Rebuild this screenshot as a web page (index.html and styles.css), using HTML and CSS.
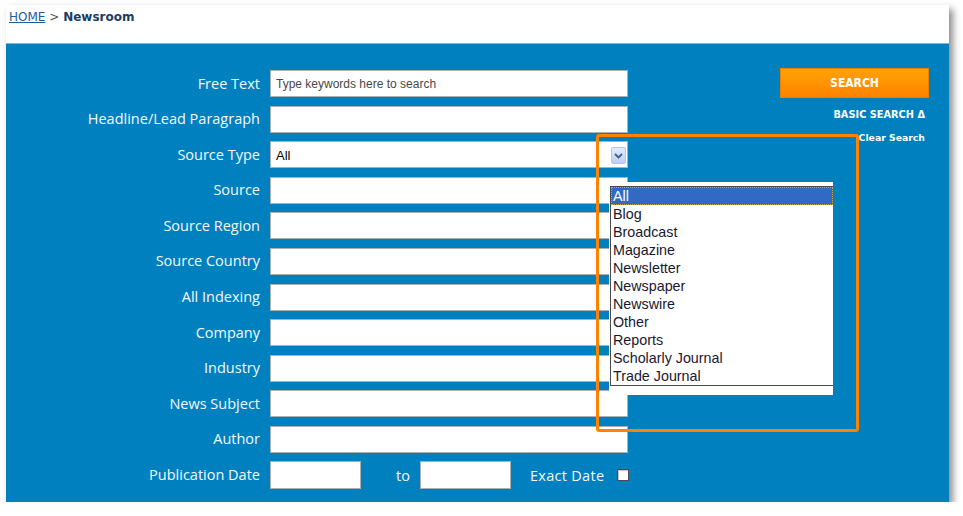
FILE: index.html
```html
<!DOCTYPE html>
<html>
<head>
<meta charset="utf-8">
<title>Newsroom</title>
<link rel="stylesheet" href="styles.css">
</head>
<body>
<div class="frame">
  <div class="crumbs"><a class="home" href="#">HOME</a> <span class="sep">&gt;</span> <b class="current">Newsroom</b></div>
  <div class="panel">
    <form class="search-form">
      <div class="fields">
        <label class="lbl">Free Text</label><input class="txt" type="text" placeholder="Type keywords here to search">
        <label class="lbl">Headline/Lead Paragraph</label><input class="txt" type="text">
        <label class="lbl">Source Type</label>
        <div class="select"><span class="sel-val">All</span><span class="sel-btn"><svg width="9" height="6" viewBox="0 0 9 6"><path d="M1 1 L4.5 4.5 L8 1" fill="none" stroke="#4a5d80" stroke-width="1.8"/></svg></span></div>
        <label class="lbl">Source</label><input class="txt" type="text">
        <label class="lbl">Source Region</label><input class="txt" type="text">
        <label class="lbl">Source Country</label><input class="txt" type="text">
        <label class="lbl">All Indexing</label><input class="txt" type="text">
        <label class="lbl">Company</label><input class="txt" type="text">
        <label class="lbl">Industry</label><input class="txt" type="text">
        <label class="lbl">News Subject</label><input class="txt" type="text">
        <label class="lbl">Author</label><input class="txt" type="text">
        <label class="lbl">Publication Date</label>
        <div class="date-row">
          <input class="txt date" type="text">
          <span class="to">to</span>
          <input class="txt date" type="text">
          <span class="exact">Exact Date</span>
          <span class="check"></span>
        </div>
      </div>
      <div class="actions">
        <button class="search-btn" type="button">SEARCH</button>
        <a class="basic" href="#">BASIC SEARCH &Delta;</a>
        <a class="clear" href="#">Clear Search</a>
      </div>
    </form>
    <div class="popup">
      <ul class="options">
        <li class="opt selected">All</li>
        <li class="opt">Blog</li>
        <li class="opt">Broadcast</li>
        <li class="opt">Magazine</li>
        <li class="opt">Newsletter</li>
        <li class="opt">Newspaper</li>
        <li class="opt">Newswire</li>
        <li class="opt">Other</li>
        <li class="opt">Reports</li>
        <li class="opt">Scholarly Journal</li>
        <li class="opt">Trade Journal</li>
      </ul>
    </div>
    <div class="callout"></div>
  </div>
</div>
</body>
</html>
```

FILE: styles.css
```css
* { box-sizing: border-box; }

html, body {
  margin: 0;
  padding: 0;
  background: #ffffff;
}

body {
  font-family: "DejaVu Sans", Verdana, sans-serif;
}

.frame {
  margin: 5px 0 0 6px;
  width: 943px;
  background: #ffffff;
  box-shadow: 4px 4px 7px rgba(0, 0, 0, 0.45);
}

.crumbs {
  height: 38px;
  padding: 5px 3px 0;
  font-size: 12px;
  line-height: 14px;
  color: #555;
}

.home {
  color: #1f5a9c;
  text-decoration: underline;
}

.sep {
  color: #555;
}

.current {
  color: #1b3d60;
  font-weight: bold;
}

.panel {
  position: relative;
  height: 459px;
  background: #0180bf;
  border-top: 1px solid #7db8de;
  padding-top: 24px;
}

.search-form {
  display: flex;
  align-items: flex-start;
}

.fields {
  margin-top: 2px;
  display: grid;
  grid-template-columns: 254px 358px;
  grid-auto-rows: 27px;
  column-gap: 10px;
  row-gap: 8.6px;
  align-items: center;
}

.lbl {
  font-family: "Open Sans", sans-serif;
  font-size: 14.5px;
  color: #f4f8fb;
  text-align: right;
  white-space: nowrap;
  line-height: 26px;
}

.txt {
  display: block;
  width: 100%;
  height: 27px;
  margin: 0;
  border: 1px solid #a9b0b6;
  background: #ffffff;
  padding: 0 5px;
  font-family: "Liberation Sans", Arial, sans-serif;
  font-size: 12px;
  color: #222;
  outline: none;
}

.txt::placeholder {
  color: #484848;
  opacity: 1;
}

.select {
  height: 27px;
  background: #ffffff;
  border: 1px solid #a9b0b6;
  display: flex;
  align-items: center;
  justify-content: space-between;
  padding: 0 1px 0 5px;
  font-family: "Liberation Sans", Arial, sans-serif;
  font-size: 13px;
  color: #000;
}

.sel-val {
  padding-top: 2px;
}

.sel-btn {
  width: 15px;
  height: 17px;
  margin-top: 2px;
  border: 1px solid #b3c6ee;
  border-radius: 2px;
  background: linear-gradient(#e3ecfd, #bccff6);
  display: flex;
  align-items: center;
  justify-content: center;
}

.date-row {
  height: 28px;
  display: flex;
  align-items: center;
  font-family: "Open Sans", sans-serif;
  font-size: 14.5px;
  color: #f4f8fb;
}

.txt.date {
  width: 91px;
  height: 28px;
}

.to {
  margin: 0 10px 0 35px;
}

.exact {
  margin-left: 19px;
  letter-spacing: 0.3px;
}

.check {
  margin-left: auto;
  margin-right: -1px;
  width: 12px;
  height: 12px;
  border: 1px solid #4c4c4c;
  background: #fff;
  box-shadow: inset 1px 1px 0 #c8c8c8;
}

.actions {
  margin-left: 152px;
  width: 149px;
  display: flex;
  flex-direction: column;
  align-items: flex-end;
}

.search-btn {
  width: 149px;
  height: 30px;
  margin: 0;
  border: 1px solid #e98000;
  background: linear-gradient(#ffa400, #ff8200);
  color: #ffffff;
  font-family: "DejaVu Sans Condensed", "DejaVu Sans", Verdana, sans-serif;
  font-stretch: condensed;
  font-weight: bold;
  font-size: 12px;
  line-height: 28px;
  padding: 0;
}

.basic,
.clear {
  color: #ffffff;
  font-weight: bold;
  text-decoration: none;
  margin-right: 4px;
  line-height: 12px;
  white-space: nowrap;
}

.basic {
  font-size: 9.8px;
  margin-top: 11px;
}

.clear {
  font-size: 9.3px;
  margin-top: 11px;
}

.popup {
  position: absolute;
  left: 603px;
  top: 138px;
  width: 224px;
  height: 213px;
  background: #ffffff;
  padding-top: 4px;
}

.options {
  list-style: none;
  margin: 0 0 0 1px;
  padding: 0;
  border: 1px solid #4a4a4a;
  border-right: none;
  font-family: "Liberation Sans", Arial, sans-serif;
  font-size: 14.3px;
  color: #1a1830;
}

.opt {
  height: 18px;
  line-height: 18px;
  padding-left: 2px;
  white-space: nowrap;
}

.opt.selected {
  background: #316ac5;
  color: #ffffff;
  outline: 1px dotted #c9a24a;
  outline-offset: -1px;
}

.callout {
  position: absolute;
  left: 590px;
  top: 90px;
  width: 263px;
  height: 298px;
  border: 3px solid #ff8200;
  border-radius: 3px;
  pointer-events: none;
}
```
